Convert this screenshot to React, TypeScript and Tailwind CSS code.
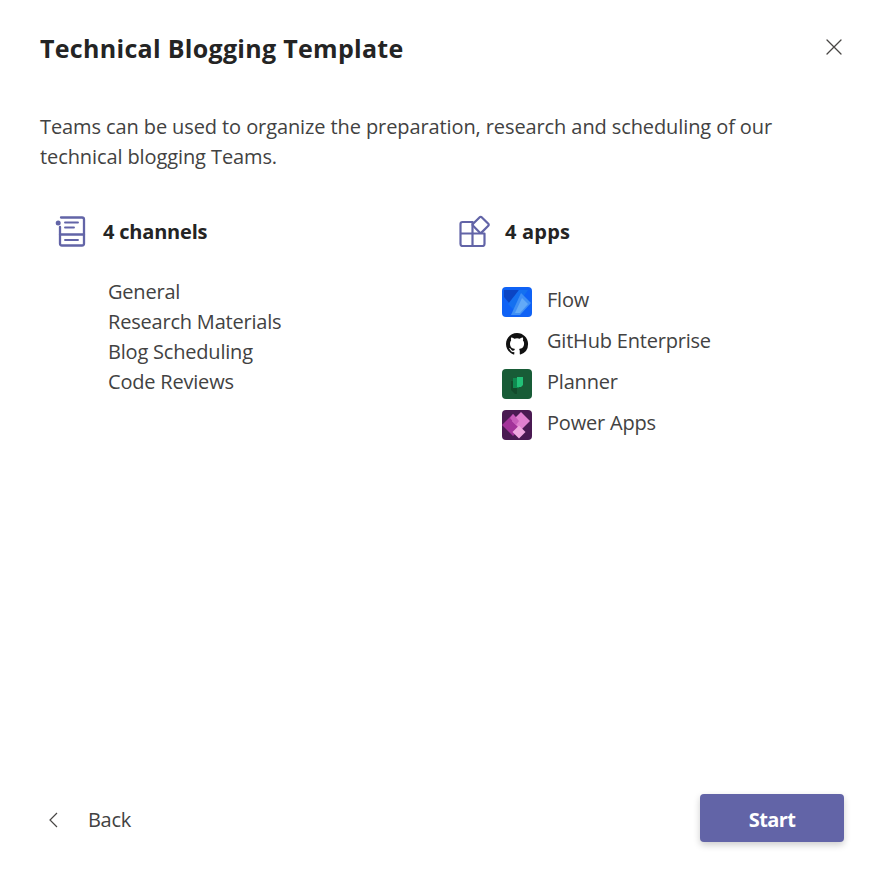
const font = { fontFamily: '"Open Sans", sans-serif' };

function ChannelsIcon() {
	return (
		<svg width="32" height="32" viewBox="0 0 32 32" fill="none" stroke="#6264a7" strokeWidth="2.3" strokeLinecap="round">
			<path d="M6 2.5h21a2 2 0 0 1 2 2v24a2 2 0 0 1-2 2H7a2 2 0 0 1-2-2V12" />
			<path d="M5 19.5h24" />
			<path d="M10 7.5h13M10 12.5h9M10 25h13" strokeWidth="1.9" />
			<circle cx="3.2" cy="8" r="2.5" fill="#6264a7" stroke="none" />
		</svg>
	);
}

function AppsIcon() {
	return (
		<svg width="32" height="32" viewBox="0 0 32 32" fill="none" stroke="#6264a7" strokeWidth="2.2" strokeLinejoin="round">
			<path d="M15.5 7H4.5a2 2 0 0 0-2 2v20a2 2 0 0 0 2 2h20a2 2 0 0 0 2-2V18.5H2.5" />
			<path d="M14.5 7v24" />
			<path d="M23.7 2.2l6.6 6.6a1.4 1.4 0 0 1 0 2l-6.6 6.6a1.4 1.4 0 0 1-2 0l-6.6-6.6a1.4 1.4 0 0 1 0-2l6.6-6.6a1.4 1.4 0 0 1 2 0z" />
		</svg>
	);
}

function FlowIcon() {
	return (
		<svg width="30" height="30" viewBox="0 0 30 30">
			<rect width="30" height="30" rx="4" fill="#0f62f5" />
			<path d="M2 3h15L8 17 2 10z" fill="#0b45c4" />
			<path d="M17 3h9l-14 20-6-6z" fill="#1470f0" />
			<path d="M19 6l10 10-11 12H9z" fill="#3f8ff5" />
			<path d="M20 11l6 6-8 9h-5z" fill="#63aaf7" />
		</svg>
	);
}

function GithubIcon() {
	return (
		<svg width="30" height="30" viewBox="0 0 30 30">
			<rect width="30" height="30" fill="#ffffff" />
			<g transform="translate(4 4.5) scale(0.92)">
				<path
					fill="#111111"
					d="M12 .5C5.37.5 0 5.87 0 12.5c0 5.3 3.44 9.8 8.2 11.39.6.11.82-.26.82-.58v-2.03c-3.34.73-4.04-1.61-4.04-1.61-.55-1.39-1.33-1.76-1.33-1.76-1.09-.74.08-.73.08-.73 1.2.08 1.84 1.24 1.84 1.24 1.07 1.83 2.81 1.3 3.5 1 .1-.78.42-1.31.76-1.61-2.67-.3-5.47-1.33-5.47-5.93 0-1.31.47-2.38 1.24-3.22-.14-.3-.54-1.52.1-3.18 0 0 1-.32 3.3 1.23a11.5 11.5 0 0 1 6 0c2.28-1.55 3.29-1.23 3.29-1.23.64 1.66.24 2.88.12 3.18a4.65 4.65 0 0 1 1.23 3.22c0 4.61-2.8 5.63-5.48 5.92.42.36.81 1.1.81 2.22v3.29c0 .32.22.7.82.58A12 12 0 0 0 24 12.5C24 5.87 18.63.5 12 .5z"
				/>
			</g>
		</svg>
	);
}

function PlannerIcon() {
	return (
		<svg width="30" height="30" viewBox="0 0 30 30">
			<rect width="30" height="30" rx="4" fill="#185c37" />
			<path d="M9 12h6v13h-2l-4-4z" fill="#124a2b" />
			<path d="M11 9h6v10h-6z" fill="#0f8a50" />
			<path d="M15 8h6v8l-2 2h-4z" fill="#22c178" />
		</svg>
	);
}

function PowerAppsIcon() {
	return (
		<svg width="30" height="30" viewBox="0 0 30 30">
			<rect width="30" height="30" rx="4" fill="#4a1a52" />
			<path d="M11 4l11 11-11 11L0 15z" fill="#a3329a" />
			<path d="M19 2l9 9-9 9-9-9z" fill="#e07fcf" />
			<path d="M17 15.500l6.500 6.500-6.500 6.500-6.500-6.500z" fill="#efa7df" />
			<path d="M11 4l6 7-3 4-6-7z" fill="#c85cba" />
		</svg>
	);
}

const channels = ["General", "Research Materials", "Blog Scheduling", "Code Reviews"];

const apps = [
	{ name: "Flow", icon: <FlowIcon /> },
	{ name: "GitHub Enterprise", icon: <GithubIcon /> },
	{ name: "Planner", icon: <PlannerIcon /> },
	{ name: "Power Apps", icon: <PowerAppsIcon /> },
];

export default function App() {
	return (
		<div style={font} className="w-[878px] h-[877px] bg-white flex flex-col text-[#242424] pl-10 pr-[34px]">
			<div className="flex justify-between items-center pt-[31px] h-[65px]">
				<h1 className="text-[25px] leading-[34px] font-bold tracking-[0.3px]">Technical Blogging Template</h1>
				<svg width="20" height="20" viewBox="0 0 20 20" className="mb-[3px]" stroke="#484644" strokeWidth="1.3" strokeLinecap="round">
					<path d="M3 3l14 14M17 3L3 17" />
				</svg>
			</div>

			<p className="mt-[47px] text-[20px] leading-[30px] text-[#424242] w-[770px] tracking-[-0.1px]">
				Teams can be used to organize the preparation, research and scheduling of our technical blogging Teams.
			</p>

			<div className="flex mt-[43px]">
				<div className="w-[402px]">
					<div className="flex items-center gap-[16px] pl-[15px] h-[32px]">
						<ChannelsIcon />
						<span className="text-[20px] font-bold tracking-[-0.2px] pt-[2px]">4 channels</span>
					</div>
					<ul className="mt-[30px] pl-[68px] text-[20px] leading-[30px] text-[#424242] tracking-[-0.2px]">
						{channels.map((c) => (
							<li key={c}>{c}</li>
						))}
					</ul>
				</div>
				<div>
					<div className="flex items-center gap-[15px] pl-[16px] h-[32px]">
						<AppsIcon />
						<span className="text-[20px] font-bold tracking-[0.2px] pt-[2px]">4 apps</span>
					</div>
					<ul className="mt-[40px] pl-[60px] flex flex-col gap-[11px]">
						{apps.map((a) => (
							<li key={a.name} className="flex items-center gap-[15px] h-[30px]">
								{a.icon}
								<span className="text-[20px] leading-[30px] text-[#424242] tracking-[-0.2px] -mt-[4px]">{a.name}</span>
							</li>
						))}
					</ul>
				</div>
			</div>

			<div className="mt-auto mb-[35px] flex justify-between items-center">
				<button className="flex items-center text-[20px] text-[#424242] tracking-[-0.3px] pt-[4px]">
					<svg width="16" height="20" viewBox="0 0 16 20" fill="none" stroke="#484644" strokeWidth="1.2" className="ml-[6px] mr-[26px]">
						<path d="M11 3L4 10l7 7" />
					</svg>
					Back
				</button>
				<button className="w-[144px] h-[48px] pt-[4px] leading-[30px] rounded-[4px] bg-[#6264a7] text-white text-[20px] font-bold tracking-[-0.6px] shadow-[0_3px_7px_rgba(0,0,0,0.2)]">
					Start
				</button>
			</div>
		</div>
	);
}
